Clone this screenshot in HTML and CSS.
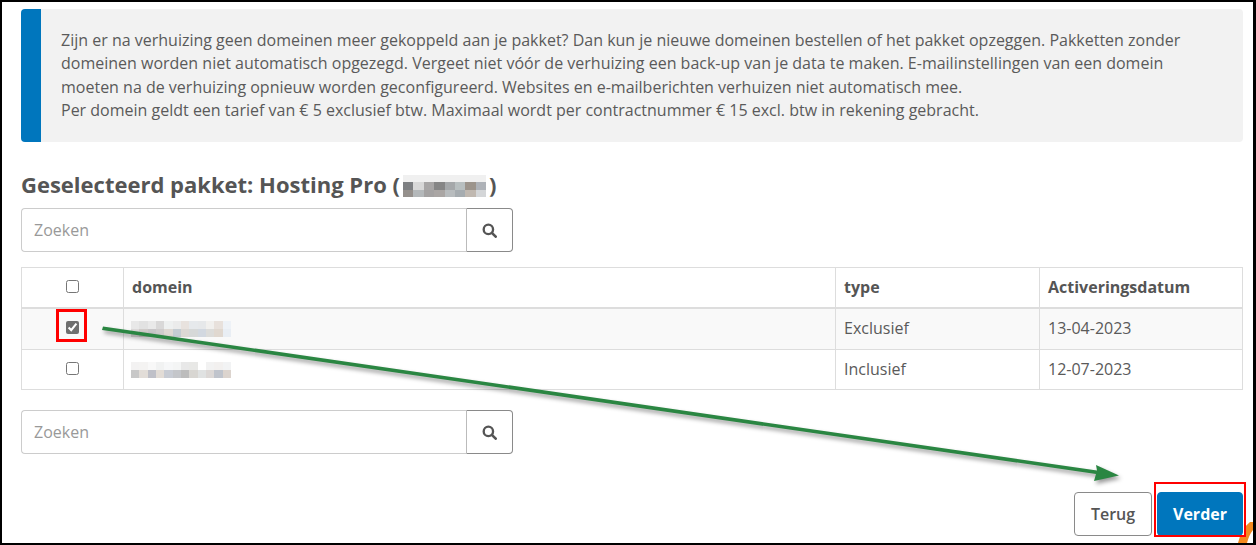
FILE: index.html
```html
<!DOCTYPE html>
<html lang="nl">
<head>
<meta charset="utf-8">
<title>Verhuizen</title>
<link rel="stylesheet" href="styles.css">
</head>
<body>
<main class="frame">
  <section class="alert">
    <p>Zijn er na verhuizing geen domeinen meer gekoppeld aan je pakket? Dan kun je nieuwe domeinen bestellen of het pakket opzeggen. Pakketten zonder domeinen worden niet automatisch opgezegd. Vergeet niet vóór de verhuizing een back-up van je data te maken. E-mailinstellingen van een domein moeten na de verhuizing opnieuw worden geconfigureerd. Websites en e-mailberichten verhuizen niet automatisch mee.<br>Per domein geldt een tarief van € 5 exclusief btw. Maximaal wordt per contractnummer € 15 excl. btw in rekening gebracht.</p>
  </section>

  <h2 class="title">Geselecteerd pakket: Hosting Pro (<svg class="mosaic-title" viewBox="0 0 8 3" preserveAspectRatio="none"><g shape-rendering="crispEdges"><rect x="0" y="0" width="8" height="1" fill="#f0f0f0"/><rect x="0" y="1" width="1" height="1" fill="#7d7f82"/><rect x="1" y="1" width="1" height="1" fill="#d8d8d8"/><rect x="2" y="1" width="1" height="1" fill="#a8a6a6"/><rect x="3" y="1" width="1" height="1" fill="#868686"/><rect x="4" y="1" width="1" height="1" fill="#a5a8aa"/><rect x="5" y="1" width="1" height="1" fill="#b8bfc0"/><rect x="6" y="1" width="1" height="1" fill="#9c948c"/><rect x="7" y="1" width="1" height="1" fill="#aeb2b8"/><rect x="0" y="2" width="1" height="1" fill="#95908c"/><rect x="1" y="2" width="1" height="1" fill="#b4b8ba"/><rect x="2" y="2" width="1" height="1" fill="#a4a2a2"/><rect x="3" y="2" width="1" height="1" fill="#aaa6a4"/><rect x="4" y="2" width="1" height="1" fill="#b8bcbe"/><rect x="5" y="2" width="1" height="1" fill="#a6acb0"/><rect x="6" y="2" width="1" height="1" fill="#c0b8b0"/><rect x="7" y="2" width="1" height="1" fill="#d4d6d8"/></g></svg>)</h2>

  <form class="search search-top">
    <input class="search-input" type="text" placeholder="Zoeken">
    <button class="search-btn" type="button" aria-label="Zoeken"><svg class="search-icon" viewBox="0 0 16 16"><circle cx="6.8" cy="6.8" r="5" fill="none" stroke="#555" stroke-width="2.5"/><path d="M10.5 10.5L14.6 14.6" stroke="#555" stroke-width="2.8" stroke-linecap="round"/></svg></button>
  </form>

  <table class="table">
    <thead>
      <tr>
        <th class="col-check"><input type="checkbox"></th>
        <th class="col-domain">domein</th>
        <th class="col-type">type</th>
        <th class="col-date">Activeringsdatum</th>
      </tr>
    </thead>
    <tbody>
      <tr class="row-odd">
        <td class="cell-check"><input type="checkbox" checked></td>
        <td class="cell-mosaic"><svg class="mosaic-row" viewBox="0 0 12 2" preserveAspectRatio="none"><g shape-rendering="crispEdges"><rect x="0" y="0" width="1" height="1" fill="#e8e8e8"/><rect x="1" y="0" width="1" height="1" fill="#e2e2e2"/><rect x="2" y="0" width="1" height="1" fill="#e9e9e9"/><rect x="3" y="0" width="1" height="1" fill="#d9d8d8"/><rect x="4" y="0" width="1" height="1" fill="#eef0f0"/><rect x="5" y="0" width="1" height="1" fill="#ebebeb"/><rect x="6" y="0" width="1" height="1" fill="#e8e2de"/><rect x="7" y="0" width="1" height="1" fill="#e6e9ec"/><rect x="8" y="0" width="1" height="1" fill="#e6e8ea"/><rect x="9" y="0" width="1" height="1" fill="#f1f0ee"/><rect x="10" y="0" width="1" height="1" fill="#e8e1dc"/><rect x="11" y="0" width="1" height="1" fill="#eef2f7"/><rect x="0" y="1" width="1" height="1" fill="#dddada"/><rect x="1" y="1" width="1" height="1" fill="#d0ccca"/><rect x="2" y="1" width="1" height="1" fill="#c8c6c8"/><rect x="3" y="1" width="1" height="1" fill="#cfcccc"/><rect x="4" y="1" width="1" height="1" fill="#ded8d2"/><rect x="5" y="1" width="1" height="1" fill="#c4ccd2"/><rect x="6" y="1" width="1" height="1" fill="#dcd8d4"/><rect x="7" y="1" width="1" height="1" fill="#d6d8d8"/><rect x="8" y="1" width="1" height="1" fill="#d2d8e0"/><rect x="9" y="1" width="1" height="1" fill="#dcdcda"/><rect x="10" y="1" width="1" height="1" fill="#e0d8d0"/><rect x="11" y="1" width="1" height="1" fill="#e9eef4"/></g></svg></td>
        <td>Exclusief</td>
        <td>13-04-2023</td>
      </tr>
      <tr>
        <td class="cell-check"><input type="checkbox"></td>
        <td class="cell-mosaic"><svg class="mosaic-row" viewBox="0 0 12 2" preserveAspectRatio="none"><g shape-rendering="crispEdges"><rect x="0" y="0" width="1" height="1" fill="#f3f2f2"/><rect x="1" y="0" width="1" height="1" fill="#f4f3f2"/><rect x="2" y="0" width="1" height="1" fill="#f8f8f8"/><rect x="3" y="0" width="1" height="1" fill="#f1f2f2"/><rect x="4" y="0" width="1" height="1" fill="#f6f7f8"/><rect x="5" y="0" width="1" height="1" fill="#f4f5f5"/><rect x="6" y="0" width="1" height="1" fill="#e8e8e8"/><rect x="7" y="0" width="1" height="1" fill="#e8e8e6"/><rect x="8" y="0" width="1" height="1" fill="#ffffff"/><rect x="9" y="0" width="1" height="1" fill="#f2f2f2"/><rect x="10" y="0" width="1" height="1" fill="#f2f0ef"/><rect x="11" y="0" width="1" height="1" fill="#f2f3f4"/><rect x="0" y="1" width="1" height="1" fill="#c8c8c8"/><rect x="1" y="1" width="1" height="1" fill="#e2ddd8"/><rect x="2" y="1" width="1" height="1" fill="#bfc0c8"/><rect x="3" y="1" width="1" height="1" fill="#e2dcd6"/><rect x="4" y="1" width="1" height="1" fill="#c8ccd4"/><rect x="5" y="1" width="1" height="1" fill="#c4c6ca"/><rect x="6" y="1" width="1" height="1" fill="#bcbcbc"/><rect x="7" y="1" width="1" height="1" fill="#d8d6d2"/><rect x="8" y="1" width="1" height="1" fill="#e0e2e2"/><rect x="9" y="1" width="1" height="1" fill="#dcd8d6"/><rect x="10" y="1" width="1" height="1" fill="#c0c4cc"/><rect x="11" y="1" width="1" height="1" fill="#dcd4ce"/></g></svg></td>
        <td>Inclusief</td>
        <td>12-07-2023</td>
      </tr>
    </tbody>
  </table>

  <form class="search search-bottom">
    <input class="search-input" type="text" placeholder="Zoeken">
    <button class="search-btn" type="button" aria-label="Zoeken"><svg class="search-icon" viewBox="0 0 16 16"><circle cx="6.8" cy="6.8" r="5" fill="none" stroke="#555" stroke-width="2.5"/><path d="M10.5 10.5L14.6 14.6" stroke="#555" stroke-width="2.8" stroke-linecap="round"/></svg></button>
  </form>

  <div class="actions">
    <button class="btn btn-back" type="button">Terug</button>
    <button class="btn btn-next" type="button">Verder</button>
  </div>

  <svg class="overlay-orange" viewBox="0 0 1256 545"><path d="M1238 543Q1241 529 1250 522L1253 522V530Q1249 535 1247 543Z" fill="#f58a1e"/><rect x="1236" y="522" width="8" height="15" fill="#fff"/></svg>
  <svg class="overlay-arrow" viewBox="0 0 1256 545"><path d="M103 326.5L1097 470.5L1096 465L1119 475.5L1094 481L1096 474L102 330Z" fill="#2a8642"/></svg>
  <div class="mark mark-check"></div>
  <div class="mark mark-next"></div>
</main>
</body>
</html>
```

FILE: styles.css
```css
* { box-sizing: border-box; }
html, body { margin: 0; padding: 0; background: #fff; }
body { width: 1256px; height: 545px; overflow: hidden; }

.frame {
  position: relative;
  width: 1256px;
  height: 545px;
  overflow: hidden;
  border: solid #000;
  border-width: 2px 3px 2px 2px;
  padding: 7px 10px 0 19px;
  font-family: "Open Sans", sans-serif;
  font-size: 16px;
  line-height: 23.4px;
  color: #5a5a5a;
  display: flex;
  flex-direction: column;
  align-items: stretch;
}

.alert {
  height: 133px;
  margin-right: 0;
  background: #f2f2f2;
  border-left: 20px solid #0076bd;
  border-radius: 4px;
  padding: 20px 21px 0 20px;
}
.alert p { margin: 0; }

.title {
  margin: 29px 0 0;
  height: 26px;
  font-size: 22px;
  line-height: 26px;
  font-weight: 700;
  color: #555;
  white-space: nowrap;
}
.mosaic-title {
  display: inline-block;
  width: 83px;
  height: 22px;
  vertical-align: -4px;
  margin: 0 3px 0 3px;
}

.search {
  display: flex;
  width: 492px;
  height: 44px;
}
.search-top { margin-top: 11px; }
.search-bottom { margin-top: 20px; }
.search-input {
  flex: 1;
  min-width: 0;
  height: 44px;
  padding: 0 12px;
  border: 1px solid #ccc;
  border-right: 0;
  border-radius: 4px 0 0 4px;
  font: 16px "Open Sans", sans-serif;
  color: #555;
  background: #fff;
  outline: 0;
}
.search-input::placeholder { color: #999; opacity: 1; }
.search-btn {
  width: 47px;
  height: 44px;
  padding: 0;
  border: 1px solid #8a8a8a;
  border-left-color: #bbb;
  border-radius: 0 4px 4px 0;
  background: #fff;
  display: flex;
  align-items: center;
  justify-content: center;
}
.search-icon { width: 15px; height: 15px; display: block; }

.table {
  margin-top: 15px;
  width: 1221px;
  table-layout: fixed;
  border-collapse: collapse;
  font-size: 16px;
}
.table th, .table td {
  border: 1px solid #ddd;
  padding: 0 8px;
  text-align: left;
  vertical-align: middle;
}
.table th {
  height: 40px;
  border-bottom-width: 2px;
  font-weight: 700;
  color: #555;
}
.table td { height: 42px; }
.table tbody tr:last-child td { height: 40px; }
.row-odd td { background: #f9f9f9; }
.table .col-check, .table .cell-check { text-align: center; padding: 0; }
.col-check { width: 102px; }
.col-domain { width: 712px; }
.col-type { width: 204px; }
.col-date { width: 203px; }
.table input[type="checkbox"] {
  display: block;
  margin: -2px auto 0;
  width: 13px;
  height: 13px;
  accent-color: #6f6f6f;
}
.mosaic-row { display: block; width: 100px; height: 16px; margin-left: -1px; }

.actions {
  position: relative;
  z-index: 1;
  margin-top: 38px;
  display: flex;
  justify-content: flex-end;
  gap: 5px;
}
.btn {
  height: 44px;
  border-radius: 4px;
  font: 700 16px "Open Sans", sans-serif;
  padding: 0;
}
.btn-back {
  width: 78px;
  background: #fff;
  border: 1px solid #8a8a8a;
  color: #555;
  font-weight: 600;
}
.btn-next {
  width: 86px;
  background: #0076bd;
  border: 1px solid #0076bd;
  color: #fff;
}

.overlay-arrow, .overlay-orange {
  position: absolute;
  left: -2px;
  top: -2px;
  width: 1256px;
  height: 545px;
  pointer-events: none;
}
.overlay-arrow { z-index: 2; filter: drop-shadow(2px 3px 2px rgba(0, 0, 0, .4)); }

.mark {
  position: absolute;
  z-index: 3;
  border: 2px solid #f00;
}
.mark-check { left: 54px; top: 307px; width: 31px; height: 33px; border-width: 3px; }
.mark-next { left: 1152px; top: 480px; width: 92px; height: 55px; }
```
